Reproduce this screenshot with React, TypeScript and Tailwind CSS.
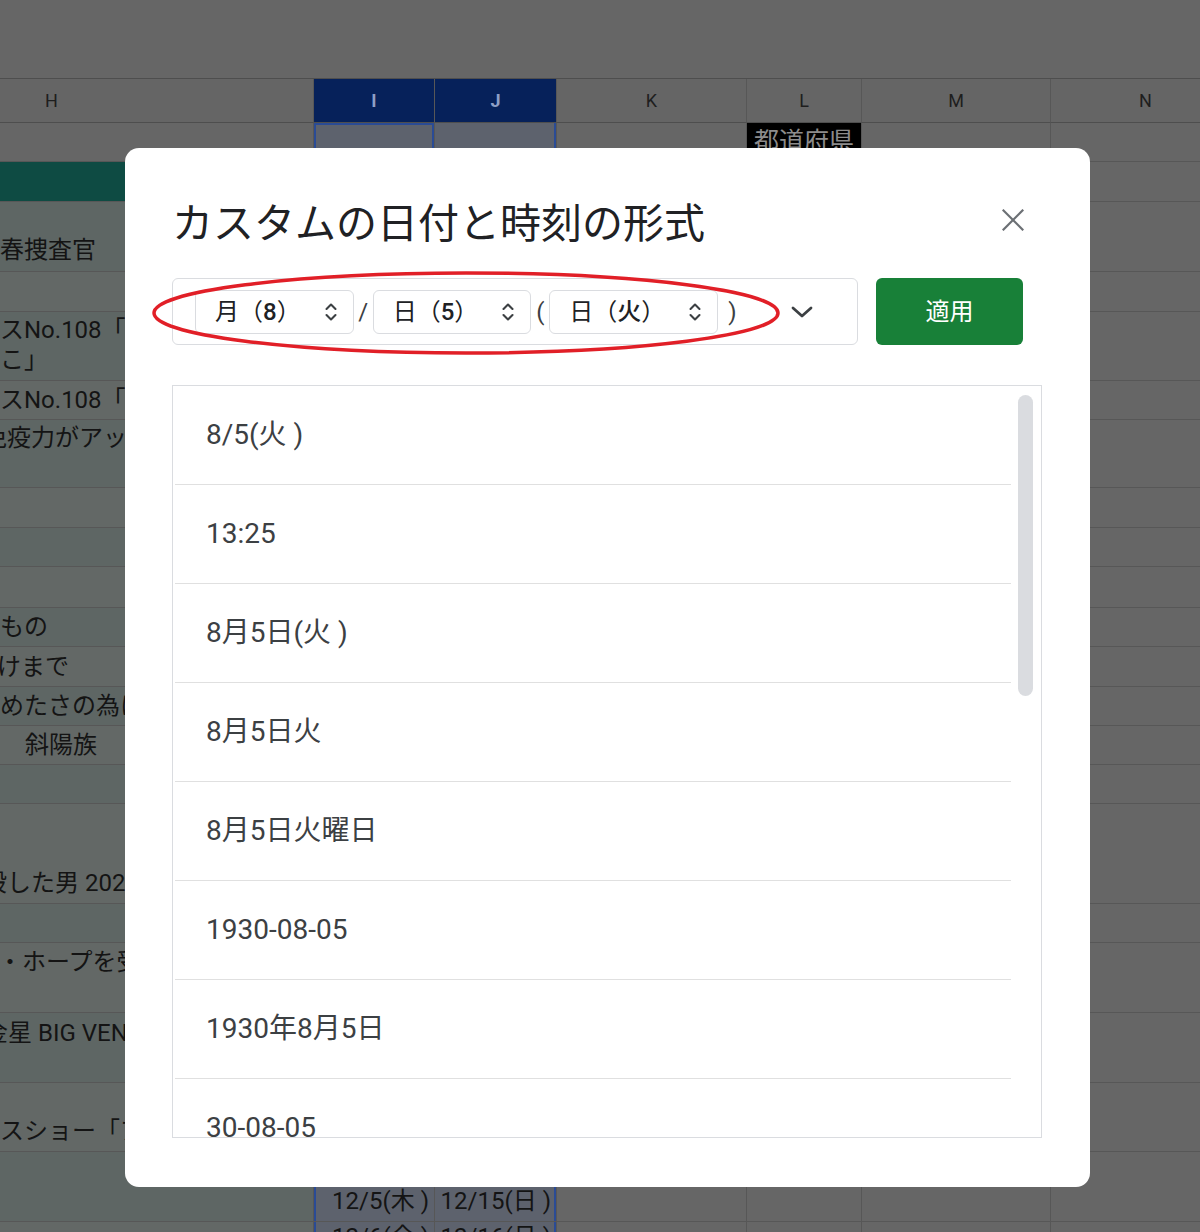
import React from "react";

const COLS = "grid grid-cols-[524px_121px_122px_190px_115px_189px_190px]";

type Row = {
  h: string;
  hBg: string;
  hCls?: string;
  tCls?: string;
  text?: string;
  iText?: string;
  jText?: string;
  ijCls?: string;
};

const rows: Row[] = [
  { h: "h-[39px]", hBg: "bg-[#666666]" },
  { h: "h-[40px]", hBg: "bg-[#0e4b43]" },
  { h: "h-[70px]", hBg: "bg-[#5e6664]", hCls: "items-end pb-[6px]", text: "春捜査官" },
  { h: "h-[40px]", hBg: "bg-[#636866]" },
  { h: "h-[69px]", hBg: "bg-[#5e6664]", hCls: "items-start pt-[3px]", text: "スNo.108「ゆうこ\nこ」", tCls: "" },
  { h: "h-[39px]", hBg: "bg-[#636866]", hCls: "items-center", text: "スNo.108「ゆう" },
  { h: "h-[68px]", hBg: "bg-[#5e6664]", hCls: "items-start pt-[3px]", text: "免疫力がアップ", tCls: "ml-[-17px]" },
  { h: "h-[40px]", hBg: "bg-[#636866]" },
  { h: "h-[39px]", hBg: "bg-[#5e6664]" },
  { h: "h-[41px]", hBg: "bg-[#636866]" },
  { h: "h-[39px]", hBg: "bg-[#5e6664]", hCls: "items-center", text: "もの" },
  { h: "h-[40px]", hBg: "bg-[#636866]", hCls: "items-center", text: "けまで", tCls: "ml-[-3px]" },
  { h: "h-[39px]", hBg: "bg-[#5e6664]", hCls: "items-center", text: "めたさの為に" },
  { h: "h-[39px]", hBg: "bg-[#636866]", hCls: "items-center", text: "斜陽族", tCls: "ml-[25px]" },
  { h: "h-[39px]", hBg: "bg-[#5e6664]" },
  { h: "h-[100px]", hBg: "bg-[#636866]", hCls: "items-end pb-[5px]", text: "殺した男 2024", tCls: "ml-[-17px]" },
  { h: "h-[39px]", hBg: "bg-[#5e6664]" },
  { h: "h-[70px]", hBg: "bg-[#636866]", hCls: "items-start pt-[4px]", text: "・ホープを受け", tCls: "ml-[-2px]" },
  { h: "h-[70px]", hBg: "bg-[#5e6664]", hCls: "items-start pt-[5px]", text: "金星 BIG VENUS", tCls: "ml-[-16px]" },
  { h: "h-[69px]", hBg: "bg-[#636866]", hCls: "items-end pb-[5px]", text: "スショー「アイ" },
  { h: "h-[70px]", hBg: "bg-[#5e6664]", iText: "12/5(木 )", jText: "12/15(日 )", ijCls: "items-end pb-[5px]" },
  { h: "h-[40px]", hBg: "bg-[#636866]", iText: "12/6(金 )", jText: "12/16(月 )", ijCls: "items-start" },
];

function Sheet() {
  const line = "border-r border-b border-[#575757]";
  return (
    <div className="flex flex-col w-[1451px] ml-[-210px]">
      <div className="h-[78px]" />
      <div className={`${COLS} h-[45px] border-t border-[#4e4e4e] text-[18px] text-[#1e1e1e]`}>
        <div className={`${line} border-b-[#4e4e4e] flex items-center justify-center bg-[#656565]`}>H</div>
        <div className={`${line} border-b-[#4e4e4e] flex items-center justify-center bg-[#06215a] text-[#8d9fc6] font-bold`}>I</div>
        <div className={`${line} border-b-[#4e4e4e] flex items-center justify-center bg-[#06215a] text-[#8d9fc6] font-bold`}>J</div>
        <div className={`${line} border-b-[#4e4e4e] flex items-center justify-center bg-[#656565]`}>K</div>
        <div className={`${line} border-b-[#4e4e4e] flex items-center justify-center bg-[#656565]`}>L</div>
        <div className={`${line} border-b-[#4e4e4e] flex items-center justify-center bg-[#656565]`}>M</div>
        <div className={`${line} border-b-[#4e4e4e] flex items-center justify-center bg-[#656565]`}>N</div>
      </div>
      {rows.map((r, idx) => (
        <div key={idx} className={`${COLS} ${r.h} text-[24px] leading-[30px] text-[#141414]`}>
          <div className={`${line} ${r.hBg} ${r.hCls ?? ""} flex overflow-hidden pl-[210px]`}>
            {r.text && <div className={`whitespace-pre ${r.tCls ?? ""}`}>{r.text}</div>}
          </div>
          <div
            className={`${line} bg-[#5d626d] flex justify-end pr-[5px] ${r.ijCls ?? ""} ${
              idx === 0 ? "shadow-[inset_0_0_0_2px_#2a4b95]" : "shadow-[inset_2px_0_0_#2a4b95]"
            }`}
          >
            {r.iText && <span className="whitespace-pre">{r.iText}</span>}
          </div>
          <div className={`${line} bg-[#5d626d] flex justify-end pr-[5px] ${r.ijCls ?? ""} shadow-[inset_-2px_0_0_#2a4b95]`}>
            {r.jText && <span className="whitespace-pre">{r.jText}</span>}
          </div>
          <div className={`${line} bg-[#666666]`} />
          {idx === 0 ? (
            <div className={`${line} bg-black flex items-center justify-center text-[25px] text-[#8c8c8c]`}>都道府県</div>
          ) : (
            <div className={`${line} bg-[#666666]`} />
          )}
          <div className={`${line} bg-[#666666]`} />
          <div className={`${line} bg-[#666666]`} />
        </div>
      ))}
    </div>
  );
}

function UpDown() {
  return (
    <svg width="12" height="22" viewBox="0 0 12 22" fill="none" stroke="#3c4043" strokeWidth="2.1" strokeLinecap="round" strokeLinejoin="round">
      <polyline points="1.5,8 6,3.5 10.5,8" />
      <polyline points="1.5,14 6,18.5 10.5,14" />
    </svg>
  );
}

function Chip({ name, value }: { name: string; value: string }) {
  return (
    <div className="h-[44px] border border-[#dadce0] rounded-[6px] flex items-center pl-[19px] pr-[16px] gap-[24px]">
      <span className="text-[24px] leading-none text-[#202124] whitespace-pre">
        {name}（<span className="font-medium">{value}</span>）
      </span>
      <UpDown />
    </div>
  );
}

function Modal() {
  return (
    <div className="absolute left-[125px] top-[148px] w-[965px] h-[1039px] bg-white rounded-[14px] flex flex-col pl-[47px]">
      <div className="mt-[48px] h-[48px] flex items-center justify-between pr-[66px]">
        <h1 className="font-['Noto_Sans_CJK_JP',sans-serif] text-[41px] leading-[48px] font-normal text-[#202124]">
          カスタムの日付と時刻の形式
        </h1>
        <svg width="22" height="22" viewBox="0 0 22 22" stroke="#6b6f74" strokeWidth="2.2" strokeLinecap="square">
          <line x1="1.5" y1="1.5" x2="20.5" y2="20.5" />
          <line x1="20.5" y1="1.5" x2="1.5" y2="20.5" />
        </svg>
      </div>
      <div className="mt-[34px] flex gap-[18px] h-[67px]">
        <div className="w-[686px] h-full border border-[#dadce0] rounded-[6px] flex items-center pl-[22px] pr-[44px]">
          <div className="flex items-center text-[24px] text-[#3c4043]">
            <Chip name="月" value="8" />
            <span className="w-[19px] text-center">/</span>
            <Chip name="日" value="5" />
            <span className="w-[18px] text-center">(</span>
            <Chip name="日" value="火" />
            <span className="ml-[10px]">)</span>
          </div>
          <div className="flex-1" />
          <svg width="22" height="12" viewBox="0 0 22 12" fill="none" stroke="#3c4043" strokeWidth="2.8" strokeLinecap="round" strokeLinejoin="round">
            <polyline points="2,2 11,10 20,2" />
          </svg>
        </div>
        <div className="w-[147px] h-full bg-[#188038] rounded-[6px] flex items-center justify-center text-white text-[24px]">
          適用
        </div>
      </div>
      <div className="mt-[40px] w-[870px] h-[753px] border border-[#dadce0] flex pl-[2px] overflow-hidden">
        <div className="w-[836px] flex flex-col shrink-0">
          {["8/5(火 )", "13:25", "8月5日(火 )", "8月5日火", "8月5日火曜日", "1930-08-05", "1930年8月5日", "30-08-05"].map((t) => (
            <div key={t} className="h-[99px] shrink-0 border-b border-[#e0e0e0] flex items-center pl-[31px] text-[28px] text-[#3c4043] whitespace-pre">
              {t}
            </div>
          ))}
        </div>
        <div className="ml-[7px] mt-[9px] w-[15px] h-[301px] rounded-full bg-[#dadce0] shrink-0" />
      </div>
    </div>
  );
}

export default function App() {
  return (
    <div className="relative w-[1200px] h-[1232px] overflow-hidden bg-[#666666] font-['Roboto','Noto_Sans_CJK_JP',sans-serif]">
      <Sheet />
      <Modal />
      <svg className="absolute left-[150px] top-[268px] pointer-events-none" width="634" height="92" viewBox="0 0 634 92" fill="none">
        <ellipse cx="316" cy="45" rx="312" ry="40" stroke="#e11f27" strokeWidth="3.5" />
      </svg>
    </div>
  );
}
